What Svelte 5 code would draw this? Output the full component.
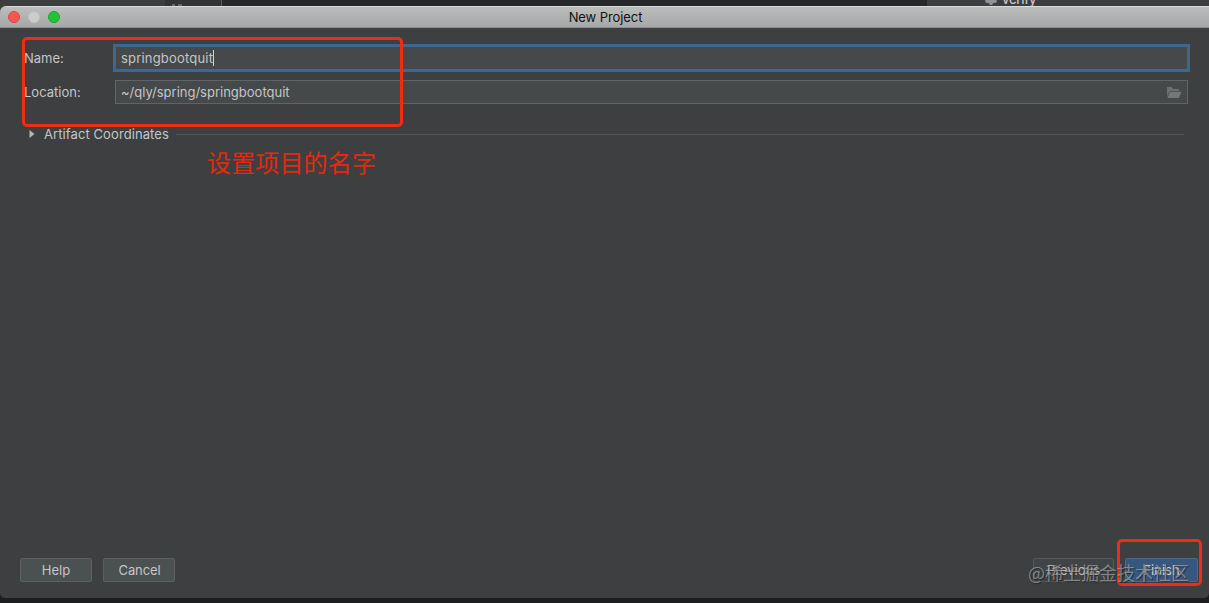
<script>
  let name = 'springbootquit';
  let location = '~/qly/spring/springbootquit';
</script>

<div class="screen">
  <!-- IDE behind the dialog -->
  <div class="backdrop">
    <div class="tool-panel"></div>
    <div class="tab-strip">
      <svg width="12" height="6" viewBox="0 0 12 6">
        <path d="M1 5h3M7 5h4" stroke="#77797a" stroke-width="1.5" />
      </svg>
    </div>
    <div class="editor"></div>
    <div class="maven-panel">
      <svg width="14" height="14" viewBox="0 0 14 14">
        <path d="M7 1v12M1.5 4l11 6M12.5 4l-11 6" stroke="#8d9399" stroke-width="3" />
        <circle cx="7" cy="7" r="3.5" fill="none" stroke="#8d9399" stroke-width="3" />
      </svg>
      <span>verify</span>
    </div>
  </div>

  <div class="window">
    <div class="title-bar">
      <div class="lights">
        <i class="close"></i>
        <i class="minimize"></i>
        <i class="zoom"></i>
      </div>
      <span class="title">New Project</span>
    </div>

    <div class="form">
      <div class="row">
        <span class="label">Name:</span>
        <div class="field focused">{name}<i class="caret"></i></div>
      </div>
      <div class="row location">
        <span class="label">Location:</span>
        <div class="field">
          <span>{location}</span>
          <svg class="folder" width="16" height="13" viewBox="0 0 16 13">
            <path d="M1 10.5V1h4.5l1.5 2h6v2H4z" fill="#6d7071" />
            <path d="M4.2 5.8H15.5L12.8 12H1.2z" fill="#747778" />
          </svg>
        </div>
      </div>
      <div class="section">
        <svg width="6" height="8" viewBox="0 0 6 8">
          <path d="M0.5 0L5.5 4L0.5 8z" fill="#b4b6b7" />
        </svg>
        <span>Artifact Coordinates</span>
        <i class="rule"></i>
      </div>
    </div>

    <div class="footer">
      <div class="btn">Help</div>
      <div class="btn cancel">Cancel</div>
      <div class="spacer"></div>
      <div class="btn previous">Previous</div>
      <div class="btn primary">Finish</div>
    </div>
  </div>

  <!-- Annotations over the dialog -->
  <div class="mark mark-fields"></div>
  <div class="mark mark-finish"></div>
  <div class="note">设置项目的名字</div>
  <div class="watermark">@稀土掘金技术社区</div>
</div>

<style>
  :global(body) {
    margin: 0;
    overflow: hidden;
  }

  .screen {
    position: relative;
    box-sizing: border-box;
    width: 1209px;
    height: 603px;
    padding-top: 6px;
    overflow: hidden;
    background: #1d1e1f;
    color: #c4c6c7;
    font-family: Inter, "Noto Sans CJK SC", sans-serif;
    font-size: 13px;
  }

  .backdrop {
    position: absolute;
    top: 0;
    left: 0;
    display: flex;
    width: 100%;
    height: 14px;
    overflow: hidden;
  }

  .tool-panel {
    width: 165px;
    background: #3b3d3f;
  }

  .tab-strip {
    display: flex;
    align-items: flex-start;
    box-sizing: border-box;
    width: 57px;
    padding-left: 6px;
    border-right: 1px solid #5a5c5d;
    background: #313335;
  }

  .editor {
    width: 705px;
    background: #272829;
  }

  .maven-panel {
    display: flex;
    flex: 1;
    align-items: flex-start;
    gap: 4px;
    padding-left: 57px;
    background: #3b3d3e;
    font-weight: 500;
  }

  .maven-panel svg {
    margin-top: -8px;
  }

  .maven-panel span {
    margin-top: -9px;
    letter-spacing: -0.25px;
    line-height: 16px;
  }

  .window {
    position: relative;
    display: flex;
    flex-direction: column;
    width: 1209px;
    height: 592px;
    border-radius: 6px 0 5px 5px;
    overflow: hidden;
    background: #3d3f41;
  }

  .title-bar {
    display: flex;
    align-items: center;
    box-sizing: border-box;
    height: 22px;
    border-top: 1px solid #d9dada;
    border-bottom: 1px solid #8c8e8e;
    background: linear-gradient(#bcbebe, #a6a8a8);
  }

  .lights {
    display: flex;
    gap: 8px;
    width: 60px;
    padding-left: 8px;
  }

  .lights i {
    box-sizing: border-box;
    width: 12px;
    height: 12px;
    border-radius: 50%;
  }

  .close {
    border: 1px solid #dd4644;
    background: #fc5552;
  }

  .minimize {
    border: 1px solid #bfc1c0;
    background: #cbcdcb;
  }

  .zoom {
    border: 1px solid #18a42e;
    background: #21c437;
  }

  .title {
    flex: 1;
    margin-right: 66px;
    color: #111;
    letter-spacing: -0.08px;
    text-align: center;
  }

  .form {
    flex: 1;
    padding: 16px 19px 0 24px;
  }

  .row {
    display: flex;
    align-items: center;
    height: 28px;
  }

  .location {
    height: 24px;
    margin-top: 8px;
  }

  .label {
    width: 91px;
  }

  .field {
    display: flex;
    flex: 1;
    align-items: center;
    justify-content: space-between;
    box-sizing: border-box;
    height: 24px;
    margin-right: 2px;
    padding: 0 5px;
    border: 1px solid #616465;
    background: #45494a;
  }

  .focused {
    justify-content: flex-start;
    height: 28px;
    margin: 0 0 0 -2px;
    padding: 0 5px;
    border: 3px solid #3e668f;
    letter-spacing: 0.19px;
  }

  .caret {
    width: 1px;
    height: 16px;
    background: #d0d2d2;
  }

  .section {
    display: flex;
    align-items: center;
    height: 20px;
    margin-top: 20px;
    padding: 0 6px 0 5px;
  }

  .section span {
    margin: 0 7px 0 9px;
    letter-spacing: 0.09px;
  }

  .rule {
    flex: 1;
    height: 1px;
    background: #515355;
  }

  .footer {
    display: flex;
    gap: 11px;
    padding: 0 11px 16px 20px;
  }

  .btn {
    display: flex;
    align-items: center;
    justify-content: center;
    box-sizing: border-box;
    width: 72px;
    height: 24px;
    border: 1px solid #5d6061;
    border-radius: 2px;
    background: #4b5051;
  }

  .cancel {
    padding-left: 1px;
    letter-spacing: -0.1px;
  }

  .spacer {
    flex: 1;
  }

  .previous {
    width: 81px;
    border-color: #555859;
    background: #414446;
    color: #bbbdbe;
  }

  .primary {
    width: 73px;
    border-color: #49698d;
    background: #365880;
    color: #d0d5da;
  }

  .mark {
    position: absolute;
    box-sizing: border-box;
    border: 3px solid #ee2d12;
    border-radius: 5px;
  }

  .mark-fields {
    top: 37px;
    left: 22px;
    width: 381px;
    height: 90px;
  }

  .mark-finish {
    top: 539px;
    left: 1117px;
    width: 85px;
    height: 47px;
  }

  .note {
    position: absolute;
    top: 144px;
    left: 207px;
    color: #e9270f;
    font-family: "Noto Sans CJK SC", sans-serif;
    font-size: 24px;
    letter-spacing: 0.15px;
    line-height: 36px;
    white-space: nowrap;
  }

  .watermark {
    position: absolute;
    top: 559px;
    left: 1028px;
    color: rgba(180, 183, 186, 0.6);
    font-family: "Noto Sans CJK SC", sans-serif;
    font-size: 18px;
    line-height: 26px;
    text-shadow: 1px 1px 1px rgba(20, 20, 20, 0.6);
    white-space: nowrap;
  }
</style>
